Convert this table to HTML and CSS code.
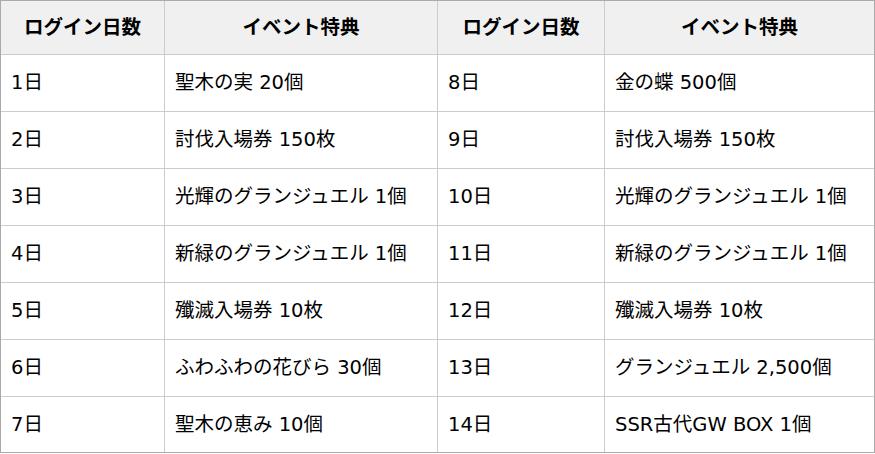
FILE: index.html
```html
<!DOCTYPE html>
<html lang="ja">
<head>
<meta charset="utf-8">
<link rel="stylesheet" href="styles.css">
</head>
<body>
<div class="tbl">
  <div class="c h">ログイン日数</div><div class="c h">イベント特典</div><div class="c h">ログイン日数</div><div class="c h last">イベント特典</div>
  <div class="c">1日</div><div class="c">聖木の実 20個</div><div class="c">8日</div><div class="c last">金の蝶 500個</div>
  <div class="c">2日</div><div class="c">討伐入場券 150枚</div><div class="c">9日</div><div class="c last">討伐入場券 150枚</div>
  <div class="c">3日</div><div class="c">光輝のグランジュエル 1個</div><div class="c">10日</div><div class="c last">光輝のグランジュエル 1個</div>
  <div class="c">4日</div><div class="c">新緑のグランジュエル 1個</div><div class="c">11日</div><div class="c last">新緑のグランジュエル 1個</div>
  <div class="c">5日</div><div class="c">殲滅入場券 10枚</div><div class="c">12日</div><div class="c last">殲滅入場券 10枚</div>
  <div class="c">6日</div><div class="c">ふわふわの花びら 30個</div><div class="c">13日</div><div class="c last">グランジュエル 2,500個</div>
  <div class="c b">7日</div><div class="c b">聖木の恵み 10個</div><div class="c b">14日</div><div class="c b last">SSR古代GW BOX 1個</div>
</div>
</body>
</html>
```
FILE: styles.css
```css
html, body {
  margin: 0;
  padding: 0;
  background: #fff;
}
.tbl {
  width: 875px;
  box-sizing: border-box;
  border: 1px solid #aaa;
  display: grid;
  grid-template-columns: 164px 273px 167px 269px;
  grid-template-rows: 54px repeat(6, 57px) 55px;
  font-family: "DejaVu Sans", "Noto Sans CJK JP", sans-serif;
  font-size: 19.5px;
  line-height: 1.2;
  color: #000;
}
.c {
  box-sizing: border-box;
  border-right: 1px solid #ccc;
  border-bottom: 1px solid #ccc;
  display: flex;
  align-items: center;
  padding: 0 10px;
  white-space: nowrap;
}
.c.last {
  border-right: none;
}
.c.b {
  border-bottom: none;
}
.h {
  background: #f0f0f0;
  font-weight: bold;
  justify-content: center;
}
```
